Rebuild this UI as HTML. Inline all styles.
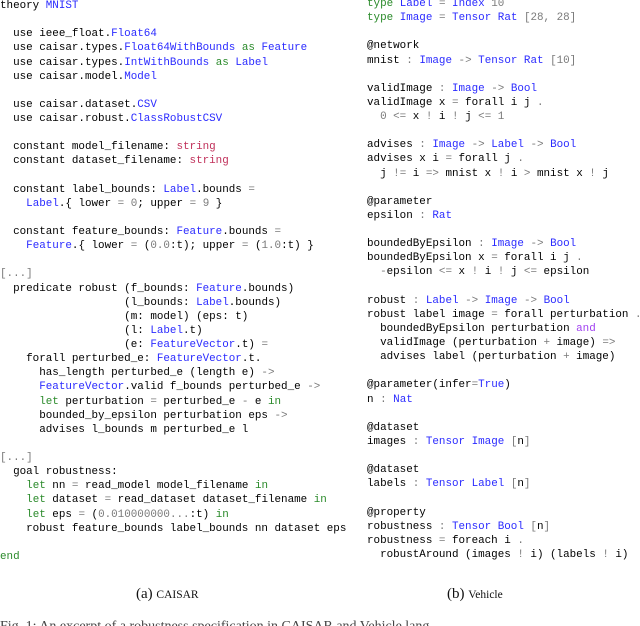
<!DOCTYPE html>
<html><head><meta charset="utf-8"><style>
html,body{margin:0;padding:0;background:#fff;width:640px;height:626px;overflow:hidden;position:relative}
pre{position:absolute;margin:0;font-family:"Liberation Mono",monospace;font-size:10.9px;line-height:14.12px;color:#000;white-space:pre}
.b{color:#2b2bff}.g{color:#2a8a2a}.r{color:#c0305a}.p{color:#a040f0}.s{color:#7a7a7a}
.cap{position:absolute;font-family:"Liberation Serif",serif;font-size:15px;color:#111;top:586px}
.sc{font-size:11.5px}
</style></head><body>
<pre style="left:0;top:-1px">theory <span class="b">MNIST</span>

  use ieee_float.<span class="b">Float64</span>
  use caisar.types.<span class="b">Float64WithBounds</span> <span class="g">as</span> <span class="b">Feature</span>
  use caisar.types.<span class="b">IntWithBounds</span> <span class="g">as</span> <span class="b">Label</span>
  use caisar.model.<span class="b">Model</span>

  use caisar.dataset.<span class="b">CSV</span>
  use caisar.robust.<span class="b">ClassRobustCSV</span>

  constant model_filename: <span class="r">string</span>
  constant dataset_filename: <span class="r">string</span>

  constant label_bounds: <span class="b">Label</span>.bounds <span class="s">=</span>
    <span class="b">Label</span>.{ lower <span class="s">=</span> <span class="s">0</span>; upper <span class="s">=</span> <span class="s">9</span> }

  constant feature_bounds: <span class="b">Feature</span>.bounds <span class="s">=</span>
    <span class="b">Feature</span>.{ lower <span class="s">=</span> (<span class="s">0.0</span>:t); upper <span class="s">=</span> (<span class="s">1.0</span>:t) }

<span class="s">[...]</span>
  predicate robust (f_bounds: <span class="b">Feature</span>.bounds)
                   (l_bounds: <span class="b">Label</span>.bounds)
                   (m: model) (eps: t)
                   (l: <span class="b">Label</span>.t)
                   (e: <span class="b">FeatureVector</span>.t) <span class="s">=</span>
    forall perturbed_e: <span class="b">FeatureVector</span>.t.
      has_length perturbed_e (length e) <span class="s">-&gt;</span>
      <span class="b">FeatureVector</span>.valid f_bounds perturbed_e <span class="s">-&gt;</span>
      <span class="g">let</span> perturbation <span class="s">=</span> perturbed_e <span class="s">-</span> e <span class="g">in</span>
      bounded_by_epsilon perturbation eps <span class="s">-&gt;</span>
      advises l_bounds m perturbed_e l

<span class="s">[...]</span>
  goal robustness:
    <span class="g">let</span> nn <span class="s">=</span> read_model model_filename <span class="g">in</span>
    <span class="g">let</span> dataset <span class="s">=</span> read_dataset dataset_filename <span class="g">in</span>
    <span class="g">let</span> eps <span class="s">=</span> (<span class="s">0.010000000...</span>:t) <span class="g">in</span>
    robust feature_bounds label_bounds nn dataset eps

<span class="g">end</span></pre>
<pre style="left:367px;top:-3px"><span class="g">type</span> <span class="b">Label</span> <span class="s">=</span> <span class="b">Index</span> <span class="s">10</span>
<span class="g">type</span> <span class="b">Image</span> <span class="s">=</span> <span class="b">Tensor Rat</span> <span class="s">[28, 28]</span>

@network
mnist <span class="s">:</span> <span class="b">Image</span> <span class="s">-&gt;</span> <span class="b">Tensor Rat</span> <span class="s">[10]</span>

validImage <span class="s">:</span> <span class="b">Image</span> <span class="s">-&gt;</span> <span class="b">Bool</span>
validImage x <span class="s">=</span> forall i j <span class="s">.</span>
  <span class="s">0 &lt;=</span> x <span class="s">!</span> i <span class="s">!</span> j <span class="s">&lt;= 1</span>

advises <span class="s">:</span> <span class="b">Image</span> <span class="s">-&gt;</span> <span class="b">Label</span> <span class="s">-&gt;</span> <span class="b">Bool</span>
advises x i <span class="s">=</span> forall j <span class="s">.</span>
  j <span class="s">!=</span> i <span class="s">=&gt;</span> mnist x <span class="s">!</span> i <span class="s">&gt;</span> mnist x <span class="s">!</span> j

@parameter
epsilon <span class="s">:</span> <span class="b">Rat</span>

boundedByEpsilon <span class="s">:</span> <span class="b">Image</span> <span class="s">-&gt;</span> <span class="b">Bool</span>
boundedByEpsilon x <span class="s">=</span> forall i j <span class="s">.</span>
  <span class="s">-</span>epsilon <span class="s">&lt;=</span> x <span class="s">!</span> i <span class="s">!</span> j <span class="s">&lt;=</span> epsilon

robust <span class="s">:</span> <span class="b">Label</span> <span class="s">-&gt;</span> <span class="b">Image</span> <span class="s">-&gt;</span> <span class="b">Bool</span>
robust label image <span class="s">=</span> forall perturbation <span class="s">.</span>
  boundedByEpsilon perturbation <span class="p">and</span>
  validImage (perturbation <span class="s">+</span> image) <span class="s">=&gt;</span>
  advises label (perturbation <span class="s">+</span> image)

@parameter(infer<span class="s">=</span><span class="b">True</span>)
n <span class="s">:</span> <span class="b">Nat</span>

@dataset
images <span class="s">:</span> <span class="b">Tensor Image</span> <span class="s">[</span>n<span class="s">]</span>

@dataset
labels <span class="s">:</span> <span class="b">Tensor Label</span> <span class="s">[</span>n<span class="s">]</span>

@property
robustness <span class="s">:</span> <span class="b">Tensor Bool</span> <span class="s">[</span>n<span class="s">]</span>
robustness <span class="s">=</span> foreach i <span class="s">.</span>
  robustAround (images <span class="s">!</span> i) (labels <span class="s">!</span> i)</pre>
<div class="cap" style="left:136px">(a) <span class="sc">CAISAR</span></div>
<div class="cap" style="left:447px">(b) <span class="sc">Vehicle</span></div>
<div class="cap" style="left:0;top:619px;font-size:14px;color:#444;white-space:nowrap">Fig. 1: An excerpt of a robustness specification in CAISAR and Vehicle lang...</div>
</body></html>
